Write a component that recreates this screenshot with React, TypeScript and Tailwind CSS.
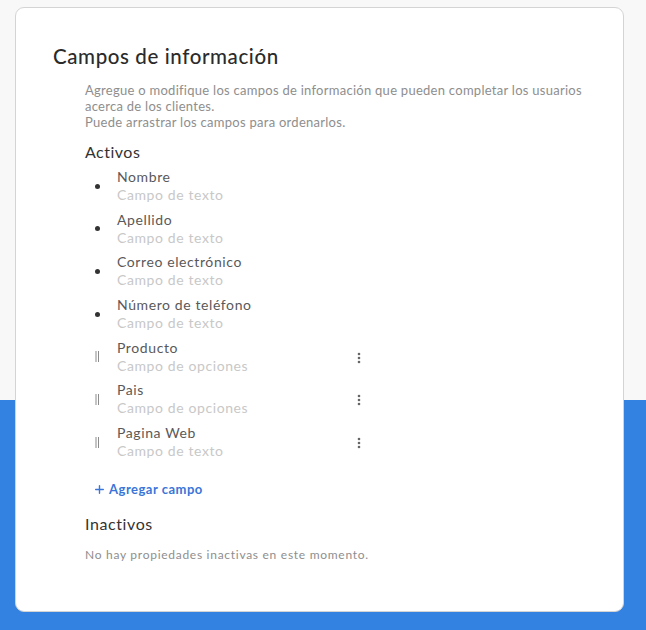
import { Plus } from 'lucide-react';

interface Field {
  name: string;
  kind: string;
  custom?: boolean;
}

const fields: Field[] = [
  { name: 'Nombre', kind: 'Campo de texto' },
  { name: 'Apellido', kind: 'Campo de texto' },
  { name: 'Correo electrónico', kind: 'Campo de texto' },
  { name: 'Número de teléfono', kind: 'Campo de texto' },
  { name: 'Producto', kind: 'Campo de opciones', custom: true },
  { name: 'Pais', kind: 'Campo de opciones', custom: true },
  { name: 'Pagina Web', kind: 'Campo de texto', custom: true },
];

function DragHandle() {
  return (
    <svg width="5" height="11" viewBox="0 0 5 11" className="text-[#8c8c8c]">
      <rect x="0.5" y="0" width="1" height="11" fill="currentColor" />
      <rect x="3" y="0" width="1" height="11" fill="currentColor" />
    </svg>
  );
}

function MoreIcon() {
  return (
    <svg width="4" height="12" viewBox="0 0 4 12" className="text-[#666]">
      <circle cx="2" cy="2" r="1.3" fill="currentColor" />
      <circle cx="2" cy="6" r="1.3" fill="currentColor" />
      <circle cx="2" cy="10" r="1.3" fill="currentColor" />
    </svg>
  );
}

function FieldRow({ field }: { field: Field }) {
  return (
    <li className="flex items-center">
      <div className="w-[32px] flex justify-start pl-[10px]">
        {field.custom ? (
          <DragHandle />
        ) : (
          <span className="block w-[5px] h-[5px] rounded-full bg-[#333]" />
        )}
      </div>
      <div className="w-[238px] flex flex-col leading-[18px] text-[14px] tracking-[0.6px]">
        <span className="text-[#595959]">{field.name}</span>
        <span className="text-[#c8c8c8]">{field.kind}</span>
      </div>
      {field.custom && (
        <button className="ml-[2px] mt-[2px] p-0">
          <MoreIcon />
        </button>
      )}
    </li>
  );
}

export default function App() {
  return (
    <div
      className="h-[630px] w-full pt-[7px] bg-[linear-gradient(to_bottom,#f8f8f8_400px,#3381e1_400px)]"
      style={{ fontFamily: "Lato, 'Noto Sans', sans-serif" }}
    >
      <div className="ml-[15px] w-[609px] h-[605px] bg-white rounded-[9px] border border-[#d4d4d4] pl-[37px] pt-[35px]">
        <h1 className="text-[20.5px] text-[#2b2b2b] leading-[26px] font-medium tracking-[0.6px]">
          Campos de información
        </h1>

        <div className="pl-[32px]">
          <p className="mt-[13px] text-[13px] leading-[16px] text-[#8e8e8e] w-[520px] tracking-[0.27px]">
            Agregue o modifique los campos de información que pueden completar los usuarios
            acerca de los clientes.
            <br />
            Puede arrastrar los campos para ordenarlos.
          </p>

          <h2 className="mt-[12px] text-[16px] leading-[20px] text-[#333] tracking-[0.5px]">Activos</h2>

          <ul className="mt-[6px] flex flex-col gap-[6.7px]">
            {fields.map((f) => (
              <FieldRow key={f.name} field={f} />
            ))}
          </ul>

          <button className="mt-[20px] ml-[8px] flex items-center gap-[3px] text-[13px] font-bold text-[#3a75d8] leading-[18px] tracking-[0.5px]">
            <Plus className="w-[13px] h-[13px]" strokeWidth={2.6} />
            Agregar campo
          </button>

          <h2 className="mt-[16px] text-[16px] leading-[20px] text-[#333] tracking-[0.6px]">Inactivos</h2>

          <p className="mt-[13px] text-[12px] leading-[16px] text-[#8e8e8e] tracking-[0.72px]">
            No hay propiedades inactivas en este momento.
          </p>
        </div>
      </div>
    </div>
  );
}
